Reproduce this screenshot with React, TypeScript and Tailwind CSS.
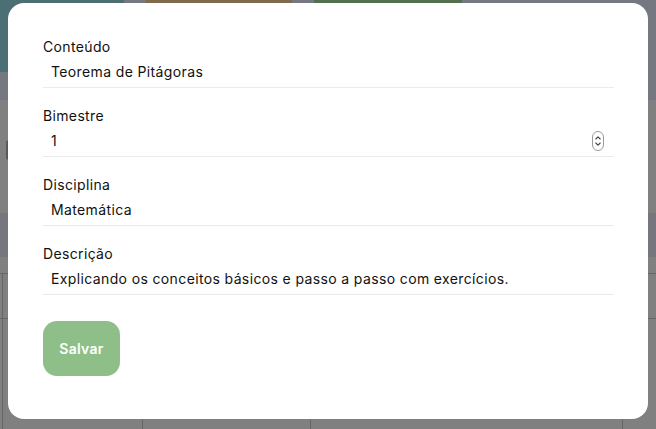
import React from "react";

const font = { fontFamily: "Inter, 'Noto Sans', sans-serif" };

function Field({ label, value, spinner }: { label: string; value: string; spinner?: boolean }) {
  return (
    <div className="flex flex-col">
      <div className="text-[14px] leading-[20px] tracking-[0.35px] text-[#111111]">{label}</div>
      <div className="flex h-[31px] items-center justify-between border-b border-[#ebebeb] pl-[8px] pr-[10px]">
        <span className="text-[14px] leading-[20px] tracking-[0.37px] text-[#111111]">{value}</span>
        {spinner && (
          <svg width="12" height="20" viewBox="0 0 12 20" className="mb-[1px]">
            <rect x="0.5" y="0.5" width="11" height="19" rx="5.5" fill="white" stroke="#9a9a9a" />
            <path d="M3.8 8 L6 5.8 L8.2 8" fill="none" stroke="#444" strokeWidth="1.1" strokeLinecap="round" strokeLinejoin="round" />
            <path d="M3.8 12 L6 14.2 L8.2 12" fill="none" stroke="#444" strokeWidth="1.1" strokeLinecap="round" strokeLinejoin="round" />
          </svg>
        )}
      </div>
    </div>
  );
}

export default function App() {
  return (
    <div className="relative h-[429px] w-[656px] overflow-hidden bg-[#808080]" style={font}>
      {/* dimmed background page */}
      <div className="flex h-[100px] bg-[#757781]">
        <div className="h-[72px] w-[124px] bg-[#4b6f73]" />
        <div className="ml-[22px] h-[60px] w-[146px] bg-[#7f6a4b]" />
        <div className="ml-[22px] h-[60px] w-[148px] bg-[#536f50]" />
      </div>
      <div className="flex h-[113px] items-start pt-[40px]">
        <div className="ml-[6px] h-[20px] w-[3px] rounded-l-full bg-[#5a5a5c]" />
      </div>
      <div className="h-[44px] bg-[#76777e]" />
      <div className="h-[16px]" />
      <div className="grid h-[45px] grid-cols-[3px_140px_168px_312px_1fr] border-t border-[#666666]">
        <div className="border-r border-[#666666]" />
        <div className="border-r border-[#666666]" />
        <div className="border-r border-[#666666]" />
        <div className="border-r border-[#666666]" />
        <div />
      </div>
      <div className="grid h-[111px] grid-cols-[3px_140px_168px_312px_1fr] border-t border-[#666666]">
        <div className="border-r border-[#666666]" />
        <div className="border-r border-[#666666]" />
        <div className="border-r border-[#666666]" />
        <div className="border-r border-[#666666]" />
        <div />
      </div>

      {/* modal */}
      <div className="absolute left-[8px] top-[3px] flex h-[416px] w-[640px] flex-col rounded-[16px] bg-white pl-[35px] pr-[34px] pt-[34px]">
        <div className="flex flex-col gap-[18px]">
          <Field label="Conteúdo" value="Teorema de Pitágoras" />
          <Field label="Bimestre" value="1" spinner />
          <Field label="Disciplina" value="Matemática" />
          <Field label="Descrição" value="Explicando os conceitos básicos e passo a passo com exercícios." />
        </div>
        <button className="mt-[26px] flex h-[55px] w-[77px] items-center justify-center rounded-[14px] bg-[#8fbf88] text-[14px] font-semibold tracking-[0.3px] text-white">
          Salvar
        </button>
      </div>
    </div>
  );
}
